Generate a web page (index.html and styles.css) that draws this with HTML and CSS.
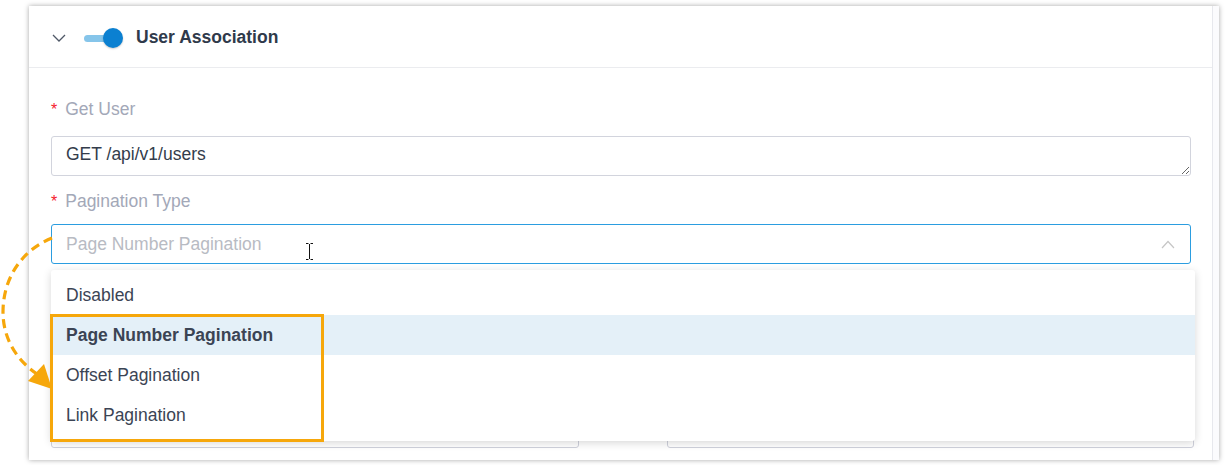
FILE: index.html
```html
<!DOCTYPE html>
<html lang="en">
<head>
<meta charset="utf-8">
<title>User Association</title>
<link rel="stylesheet" href="styles.css">
</head>
<body>
<div class="card">
  <div class="panel">
    <div class="header">
      <svg class="chev" width="14" height="8" viewBox="0 0 14 8"><path d="M1 1 L7 7 L13 1" fill="none" stroke="#4f5867" stroke-width="1.3"/></svg>
      <span class="toggle"><span class="knob"></span></span>
      <span class="title">User Association</span>
    </div>
    <div class="body">
      <div class="label lbl-first"><span class="req">*</span>Get User</div>
      <textarea class="textarea">GET /api/v1/users</textarea>
      <div class="label lbl-second"><span class="req">*</span>Pagination Type</div>
      <div class="select-wrap">
        <div class="select">
          <span class="placeholder">Page Number Pagination</span>
          <svg class="up" width="14" height="9" viewBox="0 0 14 9"><path d="M1 8 L7 1.5 L13 8" fill="none" stroke="#c6c6c6" stroke-width="1.2"/></svg>
        </div>
        <svg class="ibeam" width="10" height="17" viewBox="0 0 10 17"><path d="M1 0.5 H3.5 M5.5 0.5 H8 M4.5 1 V16 M1 16.5 H3.5 M5.5 16.5 H8" fill="none" stroke="#111" stroke-width="1"/></svg>
        <div class="dropdown">
          <div class="item">Disabled</div>
          <div class="item active">Page Number Pagination</div>
          <div class="item">Offset Pagination</div>
          <div class="item">Link Pagination</div>
          <div class="highlight-box"></div>
        </div>
      </div>
      <div class="row">
        <div class="input"></div>
        <div class="input"></div>
      </div>
    </div>
  </div>
</div>
<svg class="arrow" width="70" height="400" viewBox="0 0 70 400">
  <path d="M52 238 C22 250 3 278 3 312 C3 340 18 361 37 374" fill="none" stroke="#f6a70b" stroke-width="3.2" stroke-dasharray="9 5.5" stroke-linecap="butt"/>
  <polygon points="28,381 52,389 44,364" fill="#f6a70b"/>
</svg>
</body>
</html>
```

FILE: styles.css
```css
html, body {
  margin: 0;
  padding: 0;
  background: #ffffff;
}
body {
  font-family: "Liberation Sans", Arial, sans-serif;
  width: 1225px;
  height: 465px;
  overflow: hidden;
  position: relative;
}
.card {
  margin: 6px 0 0 29px;
  width: 1190px;
  height: 454px;
  background: #fbfbfd;
  box-shadow: 0 0 5px rgba(0, 0, 0, 0.35);
  display: flex;
}
.panel {
  width: 1184px;
  height: 100%;
  background: #ffffff;
  border-right: 1px solid #e7e8ed;
  box-sizing: border-box;
  display: flex;
  flex-direction: column;
}
.header {
  height: 59px;
  padding-top: 2px;
  border-bottom: 1px solid #ebecef;
  display: flex;
  align-items: center;
  padding-left: 23px;
  box-sizing: content-box;
}
.chev {
  display: block;
  margin-top: 1px;
}
.toggle {
  position: relative;
  width: 28px;
  height: 7px;
  border-radius: 4px;
  background: #86c5ea;
  margin-left: 18px;
  margin-top: 1px;
}
.knob {
  position: absolute;
  left: 19px;
  top: -7px;
  width: 20px;
  height: 20px;
  border-radius: 50%;
  background: #0b80d1;
  box-shadow: 0 1px 2px rgba(0, 0, 0, 0.2);
}
.title {
  margin-left: 24px;
  font-size: 17.5px;
  font-weight: bold;
  color: #2f3a4b;
}
.body {
  padding: 30px 21px 0 22px;
  display: flex;
  flex-direction: column;
}
.label {
  font-size: 17.5px;
  line-height: 22px;
  color: #a3a8b8;
}
.req {
  color: #f5222d;
  margin-right: 8px;
  font-size: 16px;
}
.lbl-first {
  margin-bottom: 15px;
}
.lbl-second {
  margin-top: 14px;
  margin-bottom: 11px;
}
.textarea {
  display: block;
  width: 100%;
  height: 40px;
  box-sizing: border-box;
  border: 1px solid #d2d4dd;
  border-radius: 3px;
  padding: 6px 14px;
  font-family: "Liberation Sans", Arial, sans-serif;
  font-size: 17.5px;
  line-height: 22px;
  color: #333c4b;
  resize: vertical;
  overflow: hidden;
  outline: none;
  margin: 0;
}
.select-wrap {
  position: relative;
}
.select {
  height: 40px;
  box-sizing: border-box;
  border: 1px solid #2b9de0;
  border-radius: 3px;
  display: flex;
  align-items: center;
  justify-content: space-between;
  padding: 0 15px 0 14px;
}
.placeholder {
  font-size: 17.5px;
  color: #b8bbc3;
}
.up {
  display: block;
  margin-top: 1px;
}
.ibeam {
  position: absolute;
  left: 254px;
  top: 19px;
}
.dropdown {
  position: absolute;
  left: 0;
  top: 46px;
  width: 1144px;
  box-sizing: border-box;
  padding: 5px 0 6px;
  background: #ffffff;
  border-radius: 3px;
  box-shadow: 0 2px 8px rgba(0, 0, 0, 0.16);
  z-index: 2;
}
.item {
  height: 40px;
  display: flex;
  align-items: center;
  padding-left: 15px;
  font-size: 17.5px;
  color: #3b4454;
}
.item.active {
  background: #e4f0f8;
  font-weight: bold;
}
.highlight-box {
  position: absolute;
  left: -1px;
  top: 44px;
  width: 274px;
  height: 128px;
  box-sizing: border-box;
  border: 3px solid #f6a70b;
}
.row {
  margin-top: 144px;
  display: grid;
  grid-template-columns: 528px 527px;
  column-gap: 88px;
}
.input {
  height: 40px;
  box-sizing: border-box;
  border: 1px solid #cfd1dc;
  border-radius: 3px;
}
.arrow {
  position: absolute;
  left: 0;
  top: 0;
  z-index: 3;
}
```
